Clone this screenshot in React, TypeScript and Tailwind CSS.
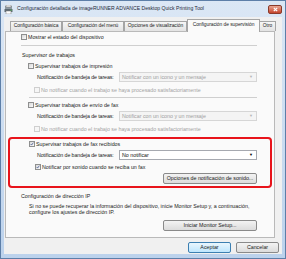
import type { ReactNode } from 'react'

const font = { fontFamily: '"Liberation Sans", Arial, sans-serif' }

function Box({ checked = false, disabled = false }: { checked?: boolean; disabled?: boolean }) {
  return (
    <span
      className={`flex h-[6px] w-[6px] shrink-0 items-center justify-center border ${
        disabled ? 'border-[#cfcfcf] bg-[#f6f6f6]' : 'border-[#8e8f8f] bg-gradient-to-br from-[#d8d8d8] to-[#fbfbfb]'
      }`}
    >
      {checked ? (
        <svg width="6" height="6" viewBox="0 0 6 6">
          <path d="M1 3 L2.4 4.6 L5 1" fill="none" stroke="#3b4f8c" strokeWidth="1.1" />
        </svg>
      ) : null}
    </span>
  )
}

function Check({ label, checked, disabled, indent }: { label: string; checked?: boolean; disabled?: boolean; indent: string }) {
  return (
    <div className={`flex h-[10px] items-center gap-[1px] ${indent}`}>
      <Box checked={checked} disabled={disabled} />
      <span className={disabled ? 'text-[#a3a3a3]' : 'text-[#1b1b1b]'}>{label}</span>
    </div>
  )
}

function Combo({ value, disabled }: { value: string; disabled?: boolean }) {
  return (
    <div
      className={`flex h-[10px] w-[138px] items-center justify-between border pl-[2px] pr-[3px] ${
        disabled ? 'border-[#d6d6d6] bg-[#f4f4f4] text-[#a0a0a0]' : 'border-[#a6a9b0] bg-white text-[#111]'
      }`}
    >
      <span>{value}</span>
      <span className={`text-[4px] ${disabled ? 'text-[#b5b5b5]' : 'text-black'}`}>▼</span>
    </div>
  )
}

function Notif({ value, disabled, indent }: { value: string; disabled?: boolean; indent: string }) {
  return (
    <div className={`flex h-[10px] items-center ${indent}`}>
      <span className="w-[82px] shrink-0 tracking-[-0.1px] text-[#1b1b1b]">Notificación de bandeja de tareas:</span>
      <Combo value={value} disabled={disabled} />
    </div>
  )
}

function Btn({ children, width, primary }: { children: ReactNode; width: string; primary?: boolean }) {
  return (
    <div
      className={`flex h-[11px] ${width} items-center justify-center rounded-[2px] border ${
        primary
          ? 'border-[#3c7fb1] bg-gradient-to-b from-[#eaf6fd] to-[#bee6fd]'
          : 'border-[#8a8a8a] bg-gradient-to-b from-[#f3f3f3] to-[#dcdcdc]'
      } text-[#1b1b1b]`}
    >
      {children}
    </div>
  )
}

const tabs = [
  { label: 'Configuración básica', w: 'w-[52px]' },
  { label: 'Configuración del menú', w: 'w-[62px]' },
  { label: 'Opciones de visualización', w: 'w-[63px]' },
]

export default function App() {
  return (
    <div
      className="flex h-[259px] w-[286px] flex-col overflow-hidden whitespace-nowrap border border-[#5d7fa8] bg-gradient-to-b from-[#dbe7f5] to-[#bcd2ec] text-[5.3px] leading-none"
      style={font}
    >
      {/* title bar */}
      <div className="flex h-[16px] shrink-0 items-center pl-[3px] pr-[3px]">
        <svg width="9" height="9" viewBox="0 0 9 9" className="shrink-0">
          <rect x="1" y="1" width="7" height="4" fill="#8f9aa3" />
          <rect x="2" y="0" width="5" height="2" fill="#f4f4f4" stroke="#7a7a7a" strokeWidth="0.5" />
          <rect x="0.5" y="4" width="8" height="3" fill="#5e6a73" />
          <rect x="2" y="6" width="5" height="3" fill="#ffffff" stroke="#7a7a7a" strokeWidth="0.5" />
          <rect x="6.5" y="4.6" width="1.2" height="1" fill="#4ec04e" />
        </svg>
        <span className="ml-[4px] text-[5.1px] text-[#1e2a3a]">
          Configuración detallada de imageRUNNER ADVANCE Desktop Quick Printing Tool
        </span>
        <div className="ml-auto flex h-[9px] w-[14px] items-center justify-center rounded-[2px] border border-[#8a3a2a] bg-gradient-to-b from-[#e8a593] to-[#c4422a]">
          <svg width="5" height="5" viewBox="0 0 5 5">
            <path d="M0.8 0.8 L4.2 4.2 M4.2 0.8 L0.8 4.2" stroke="#ffffff" strokeWidth="1.2" />
          </svg>
        </div>
      </div>

      {/* client */}
      <div className="mx-[3px] flex flex-1 flex-col bg-[#f0f0f0] pt-[1px]">
        {/* tabs */}
        <div className="relative z-10 flex h-[13px] items-end pl-[6px] text-[4.9px] tracking-[-0.05px]">
          {tabs.map((t) => (
            <div
              key={t.label}
              className={`flex h-[10px] ${t.w} items-center justify-center border border-b-0 border-[#a5a5a5] bg-gradient-to-b from-[#f6f6f6] to-[#e3e3e3] text-[#1b1b1b]`}
            >
              {t.label}
            </div>
          ))}
          <div className="-mb-[1px] flex h-[13px] w-[73px] items-center justify-center border border-b-0 border-[#a5a5a5] bg-[#fafafa] pb-[1px] text-[#1b1b1b]">
            Configuración de supervisión
          </div>
          <div className="flex h-[10px] w-[16px] items-center justify-center border border-b-0 border-l-0 border-[#a5a5a5] bg-gradient-to-b from-[#f6f6f6] to-[#e3e3e3] text-[#1b1b1b]">
            Otro
          </div>
        </div>

        {/* panel */}
        <div className="ml-[1px] flex h-[207px] w-[270px] flex-col border border-[#b9b9b9] bg-[#fafafa] pb-[6px]">
          <Check label="Mostrar el estado del dispositivo" indent="ml-[15px] h-[11px]" />
          <div className="ml-[15px] mt-[2px] h-px w-[236px] bg-[#cfcfcf]" />

          <div className="ml-[16px] mt-[5px] flex h-[10px] items-center text-[#1b1b1b]">Supervisor de trabajos</div>
          <div className="mt-[1px]">
            <Check label="Supervisar trabajos de impresión" indent="ml-[22px]" />
          </div>
          <div className="mt-[1px]">
            <Notif value="Notificar con un icono y un mensaje" disabled indent="ml-[31px]" />
          </div>
          <div className="mt-[3px]">
            <Check label="No notificar cuando el trabajo se haya procesado satisfactoriamente" disabled indent="ml-[28px]" />
          </div>
          <div className="ml-[23px] mt-[2px] h-px w-[228px] bg-[#cfcfcf]" />
          <div className="mt-[2px]">
            <Check label="Supervisar trabajos de envío de fax" indent="ml-[22px]" />
          </div>
          <div className="mt-[1px]">
            <Notif value="Notificar con un icono y un mensaje" disabled indent="ml-[31px]" />
          </div>
          <div className="mt-[3px]">
            <Check label="No notificar cuando el trabajo se haya procesado satisfactoriamente" disabled indent="ml-[28px]" />
          </div>

          {/* highlighted section */}
          <div className="ml-[2px] mt-[3px] flex w-[264px] flex-col rounded-[4px] border-2 border-[#e8141b] pb-[2px]">
            <Check label="Supervisar trabajos de fax recibidos" checked indent="ml-[19px]" />
            <div className="mt-[1px]">
              <Notif value="No notificar" indent="ml-[27px]" />
            </div>
            <div className="mt-[2px]">
              <Check label="Notificar por sonido cuando se reciba un fax" checked indent="ml-[25px]" />
            </div>
            <div className="ml-[153px] mt-[1px]">
              <Btn width="w-[94px]">Opciones de notificación de sonido...</Btn>
            </div>
          </div>

          <div className="ml-[15px] mt-[3px] flex h-[10px] items-center text-[#1b1b1b]">Configuración de dirección IP</div>
          <div className="ml-[23px] mt-[2px] leading-[6px] text-[#1b1b1b]">
            <div>Si no se puede recuperar la información del dispositivo, inicie Monitor Setup y, a continuación,</div>
            <div>configure los ajustes de dirección IP.</div>
          </div>
          <div className="ml-[157px] mt-[5px]">
            <Btn width="w-[94px]">Iniciar Monitor Setup...</Btn>
          </div>
        </div>

        {/* dialog buttons */}
        <div className="mt-[4px] flex gap-[5px] pl-[184px]">
          <Btn width="w-[43px]" primary>Aceptar</Btn>
          <Btn width="w-[43px]">Cancelar</Btn>
        </div>
      </div>
      <div className="h-[4px] shrink-0" />
    </div>
  )
}
